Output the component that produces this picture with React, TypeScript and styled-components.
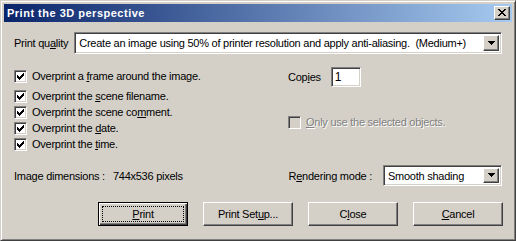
import React from 'react';
import styled, { createGlobalStyle, css } from 'styled-components';

const FACE = '#d4d0c8';
const SHADOW = '#808080';
const DARK = '#404040';
const LIGHT = '#ffffff';
const FONT = '"Liberation Sans", Arial, sans-serif';

const GlobalStyle = createGlobalStyle`
  html, body { margin: 0; padding: 0; background: ${FACE}; }
  body { font-family: ${FONT}; font-size: 11px; letter-spacing: -0.25px; color: #000; }
  u { text-underline-offset: 1px; }
`;

const Window = styled.div`
  width: 516px;
  height: 241px;
  box-sizing: border-box;
  background: ${FACE};
  border: 1px solid;
  border-color: ${FACE} ${DARK} ${DARK} ${FACE};
  box-shadow: inset 1px 1px ${LIGHT}, inset -1px -1px ${SHADOW};
  padding: 3px;
  display: flex;
  flex-direction: column;
`;

const TitleBar = styled.div`
  height: 18px;
  flex: none;
  display: flex;
  align-items: center;
  justify-content: space-between;
  padding: 0 2px;
  background: linear-gradient(to right, #0a246a, #a6caf0);
`;

const Title = styled.span`
  color: #fff;
  font-weight: bold;
  font-size: 11px;
  letter-spacing: 0.5px;
  padding-left: 1px;
`;

const raised = css`
  background: ${FACE};
  border: 1px solid;
  border-color: ${LIGHT} ${DARK} ${DARK} ${LIGHT};
  box-shadow: inset -1px -1px ${SHADOW}, inset 1px 1px ${FACE};
  box-sizing: border-box;
`;

const sunken = css`
  border: 1px solid;
  border-color: ${SHADOW} ${LIGHT} ${LIGHT} ${SHADOW};
  box-shadow: inset 1px 1px ${DARK}, inset -1px -1px ${FACE};
  box-sizing: border-box;
`;

const CloseButton = styled.div`
  ${raised};
  width: 16px;
  height: 14px;
  display: flex;
  align-items: center;
  justify-content: center;
  padding: 0 1px 1px 0;
`;

const Body = styled.div`
  flex: 1;
  display: flex;
  flex-direction: column;
  padding: 10px 10px 0 10px;
`;

const Row = styled.div`
  display: flex;
  align-items: center;
  white-space: nowrap;
`;

const QualityRow = styled(Row)`
  gap: 6px;
`;

const Label = styled.span`
  flex: none;
`;

const Combo = styled.div<{ $height: number; $width?: number }>`
  ${sunken};
  background: #fff;
  height: ${(p) => p.$height}px;
  ${(p) => (p.$width ? `width: ${p.$width}px;` : 'flex: 1;')}
  min-width: 0;
  display: flex;
  align-items: center;
  padding: 2px;
  white-space: nowrap;
`;

const ComboText = styled.span`
  flex: 1;
  padding-left: 2px;
  overflow: hidden;
`;

const DropButton = styled.div`
  ${raised};
  width: 16px;
  flex: none;
  align-self: stretch;
  display: flex;
  align-items: center;
  justify-content: center;
  padding-bottom: 1px;
`;

const Main = styled.div`
  display: grid;
  grid-template-columns: 274px 1fr;
  margin-top: 13px;
`;

const Column = styled.div`
  display: flex;
  flex-direction: column;
`;

const CheckRow = styled.label<{ $first?: boolean; $disabled?: boolean }>`
  display: flex;
  align-items: center;
  gap: 5px;
  white-space: nowrap;
  height: ${(p) => (p.$first ? 18 : 16)}px;
  margin-bottom: ${(p) => (p.$first ? 3 : 0)}px;
  ${(p) =>
    p.$disabled &&
    css`
      color: ${SHADOW};
      text-shadow: 1px 1px #fff;
    `}
`;

const Box = styled.span<{ $disabled?: boolean }>`
  ${sunken};
  width: 13px;
  height: 13px;
  flex: none;
  background: ${(p) => (p.$disabled ? FACE : LIGHT)};
  display: flex;
  align-items: center;
  justify-content: center;
`;

const CopiesRow = styled(Row)`
  height: 20px;
  gap: 10px;
`;

const CopiesInput = styled.div`
  ${sunken};
  background: #fff;
  width: 30px;
  height: 20px;
  padding: 0 3px;
  display: flex;
  align-items: center;
  font-size: 12px;
`;

const SelectedRow = styled.div`
  margin-top: 27px;
`;

const InfoRow = styled(Row)`
  justify-content: space-between;
  margin-top: 13px;
`;

const Value = styled.span`
  margin-left: 8px;
`;

const RenderGroup = styled(Row)`
  gap: 11px;
`;

const ButtonRow = styled(Row)`
  justify-content: flex-end;
  gap: 15px;
  margin-top: 16px;
  margin-right: -1px;
`;

const Button = styled.button<{ $default?: boolean }>`
  ${raised};
  width: 90px;
  height: 24px;
  padding: 0;
  font: 11px ${FONT};
  letter-spacing: -0.25px;
  color: #000;
  position: relative;
  ${(p) =>
    p.$default &&
    css`
      border-color: #000;
      box-shadow: inset 1px 1px ${LIGHT}, inset -1px -1px ${DARK}, inset -2px -2px ${SHADOW};
      &::after {
        content: '';
        position: absolute;
        inset: 3px;
        border: 1px dotted #000;
      }
    `}
`;

const CHECK_TOPS = [2, 3, 4, 3, 2, 1, 0];

const CheckMark = () => (
  <svg width="7" height="7" viewBox="0 0 7 7" shapeRendering="crispEdges">
    {CHECK_TOPS.map((top, x) => (
      <rect key={x} x={x} y={top} width="1" height="3" fill="#000" />
    ))}
  </svg>
);

const CloseGlyph = () => (
  <svg width="8" height="7" viewBox="0 0 8 7" shapeRendering="crispEdges">
    {[0, 1, 2, 3, 4, 5, 6].map((r) => {
      const m = Math.min(r, 6 - r);
      return (
        <g key={r}>
          <rect x={m} y={r} width="2" height="1" fill="#000" />
          <rect x={6 - m} y={r} width="2" height="1" fill="#000" />
        </g>
      );
    })}
  </svg>
);

const Arrow = () => (
  <svg width="7" height="4" viewBox="0 0 7 4" shapeRendering="crispEdges">
    {[0, 1, 2, 3].map((r) => (
      <rect key={r} x={r} y={r} width={7 - 2 * r} height="1" fill="#000" />
    ))}
  </svg>
);

type CheckProps = {
  children: React.ReactNode;
  checked?: boolean;
  disabled?: boolean;
  first?: boolean;
};

const Check = ({ children, checked, disabled, first }: CheckProps) => (
  <CheckRow $first={first} $disabled={disabled}>
    <Box $disabled={disabled}>{checked && <CheckMark />}</Box>
    <span>{children}</span>
  </CheckRow>
);

export default function App() {
  return (
    <>
      <GlobalStyle />
      <Window>
        <TitleBar>
          <Title>Print the 3D perspective</Title>
          <CloseButton>
            <CloseGlyph />
          </CloseButton>
        </TitleBar>
        <Body>
          <QualityRow>
            <Label>
              Print qu<u>a</u>lity
            </Label>
            <Combo $height={22}>
              <ComboText>
                Create an image using 50% of printer resolution and apply anti-aliasing.&nbsp; (Medium+)
              </ComboText>
              <DropButton>
                <Arrow />
              </DropButton>
            </Combo>
          </QualityRow>

          <Main>
            <Column>
              <Check checked first>
                Overprint a <u>f</u>rame around the image.
              </Check>
              <Check checked>
                Overprint the <u>s</u>cene filename.
              </Check>
              <Check checked>
                Overprint the scene co<u>m</u>ment.
              </Check>
              <Check checked>
                Overprint the <u>d</u>ate.
              </Check>
              <Check checked>
                Overprint the <u>t</u>ime.
              </Check>
            </Column>
            <Column>
              <CopiesRow>
                <Label>
                  Cop<u>i</u>es
                </Label>
                <CopiesInput>1</CopiesInput>
              </CopiesRow>
              <SelectedRow>
                <Check disabled>
                  <u>O</u>nly use the selected objects.
                </Check>
              </SelectedRow>
            </Column>
          </Main>

          <InfoRow>
            <span>
              Image dimensions :<Value>744x536 pixels</Value>
            </span>
            <RenderGroup>
              <Label>
                R<u>e</u>ndering mode :
              </Label>
              <Combo $height={21} $width={119}>
                <ComboText>Smooth shading</ComboText>
                <DropButton>
                  <Arrow />
                </DropButton>
              </Combo>
            </RenderGroup>
          </InfoRow>

          <ButtonRow>
            <Button $default>
              <u>P</u>rint
            </Button>
            <Button>
              Print Set<u>u</u>p...
            </Button>
            <Button>
              C<u>l</u>ose
            </Button>
            <Button>
              <u>C</u>ancel
            </Button>
          </ButtonRow>
        </Body>
      </Window>
    </>
  );
}
